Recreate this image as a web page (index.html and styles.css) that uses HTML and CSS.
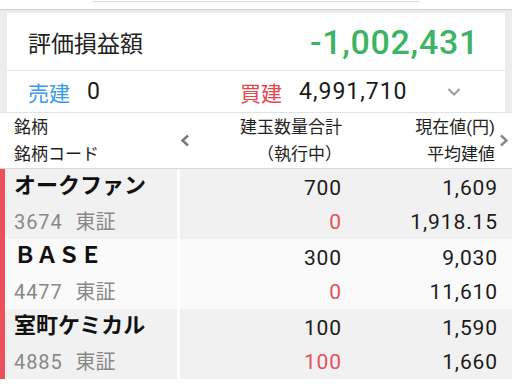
FILE: index.html
```html
<!DOCTYPE html>
<html lang="ja">
<head>
  <meta charset="UTF-8">
  <meta name="viewport" content="width=device-width, initial-scale=1">
  <title>建玉一覧</title>
  <link rel="stylesheet" href="styles.css">
</head>
<body>
  <div class="top">
    <div class="top-tab"></div>
  </div>

  <section class="summary">
    <div class="summary-card">
      <div class="pl-row">
        <span class="pl-label">評価損益額</span>
        <span class="pl-value">-1,002,431</span>
      </div>
      <div class="pos-row">
        <div class="pos pos-sell"><span class="pos-label">売建</span><span class="pos-num">0</span></div>
        <div class="pos pos-buy"><span class="pos-label">買建</span><span class="pos-num">4,991,710</span></div>
        <svg class="chev-down" width="14" height="10" viewBox="0 0 14 10"><path d="M1.5 2 L7 7.5 L12.5 2" fill="none" stroke="#9a9a9a" stroke-width="2"/></svg>
      </div>
    </div>
  </section>

  <div class="table-head">
    <div class="th th-name"><span>銘柄</span><span>銘柄コード</span></div>
    <div class="th-arrow"><svg width="10" height="13" viewBox="0 0 10 13"><path d="M8 1.5 L2.5 6.5 L8 11.5" fill="none" stroke="#777" stroke-width="2.4"/></svg></div>
    <div class="th th-qty"><span>建玉数量合計</span><span>（執行中）</span></div>
    <div class="th th-price"><span>現在値(円)</span><span>平均建値</span></div>
    <div class="th-arrow"><svg width="10" height="13" viewBox="0 0 10 13"><path d="M2 1.5 L7.5 6.5 L2 11.5" fill="none" stroke="#888" stroke-width="2.4"/></svg></div>
  </div>

  <div class="rows">
    <div class="row">
      <div class="mark"></div>
      <div class="cell cell-name"><div class="name">オークファン</div><div class="code">3674<span class="mkt">東証</span></div></div>
      <div class="gap"></div>
      <div class="cell cell-num"><div>700</div><div class="red">0</div></div>
      <div class="cell cell-num"><div>1,609</div><div>1,918.15</div></div>
      <div class="cell"></div>
    </div>
    <div class="row">
      <div class="mark"></div>
      <div class="cell cell-name"><div class="name">ＢＡＳＥ</div><div class="code">4477<span class="mkt">東証</span></div></div>
      <div class="gap"></div>
      <div class="cell cell-num"><div>300</div><div class="red">0</div></div>
      <div class="cell cell-num"><div>9,030</div><div>11,610</div></div>
      <div class="cell"></div>
    </div>
    <div class="row">
      <div class="mark"></div>
      <div class="cell cell-name"><div class="name">室町ケミカル</div><div class="code">4885<span class="mkt">東証</span></div></div>
      <div class="gap"></div>
      <div class="cell cell-num"><div>100</div><div class="red">100</div></div>
      <div class="cell cell-num"><div>1,590</div><div>1,660</div></div>
      <div class="cell"></div>
    </div>
  </div>
</body>
</html>
```

FILE: styles.css
```css
* { margin: 0; padding: 0; box-sizing: border-box; }
body {
  font-family: Roboto, "Noto Sans CJK JP", sans-serif;
  background: #fff;
  color: #111;
  width: 512px;
  overflow: hidden;
}

.top {
  height: 10px;
  border-bottom: 1px solid #cfcfcf;
}
.top-tab {
  width: 328px;
  height: 2px;
  margin-left: 92px;
  border-bottom: 1px solid #dcdcdc;
  border-radius: 0 0 10px 10px;
}

.summary {
  background: #ececec;
  padding: 3px 7px 0;
}
.summary-card { background: #fff; }
.pl-row {
  height: 58px;
  display: flex;
  align-items: center;
  justify-content: space-between;
  padding: 0 26px 0 21px;
  border-bottom: 1px solid #e6e6e6;
}
.pl-label {
  font-size: 23px;
  color: #222;
}
.pl-value {
  font-size: 34px;
  font-weight: 500;
  letter-spacing: 0.7px;
  color: #3db463;
}
.pos-row {
  height: 41px;
  display: flex;
  align-items: center;
  padding: 0 44px 0 21px;
}
.pos { display: flex; align-items: center; }
.pos-sell { width: 212px; }
.pos-label { font-size: 21px; margin-right: 17px; }
.pos-sell .pos-label { color: #3c9ae6; }
.pos-buy .pos-label { color: #e8464f; }
.pos-num {
  font-size: 23px;
  letter-spacing: 1px;
  color: #1a1a1a;
}
.chev-down { margin-left: auto; }

.table-head {
  display: grid;
  grid-template-columns: 178px 14px 150px 153px 17px;
  align-items: center;
  height: 57px;
  border-top: 1px solid #e2e2e2;
  border-bottom: 1px solid #d8d8d8;
  font-size: 17px;
  color: #222;
}
.th { display: flex; flex-direction: column; }
.th span { line-height: 27px; }
.th-name { padding-left: 14px; }
.th-qty, .th-price { align-items: flex-end; }
.th-arrow { display: flex; justify-content: center; }

.row {
  display: grid;
  grid-template-columns: 5px 172px 3px 162px 156px 14px;
  height: 70px;
}
.row .cell { background: #f1f1f1; border-bottom: 1px solid #dadada; }
.row:nth-child(even) .cell { background: #fafafa; }
.mark { background: #ef4f5a; }
.gap { background: #fff; }
.cell-name { padding-left: 9px; }
.name {
  font-size: 22px;
  font-weight: 700;
  line-height: 34px;
}
.code {
  font-size: 20px;
  letter-spacing: 0.9px;
  line-height: 34px;
  margin-top: 2px;
  color: #888;
}
.mkt { margin-left: 13px; letter-spacing: 0; }
.cell-num {
  padding-top: 2px;
  font-size: 21px;
  letter-spacing: 0.9px;
  line-height: 34px;
  text-align: right;
  color: #1a1a1a;
}
.red { color: #e5505a; }
```
